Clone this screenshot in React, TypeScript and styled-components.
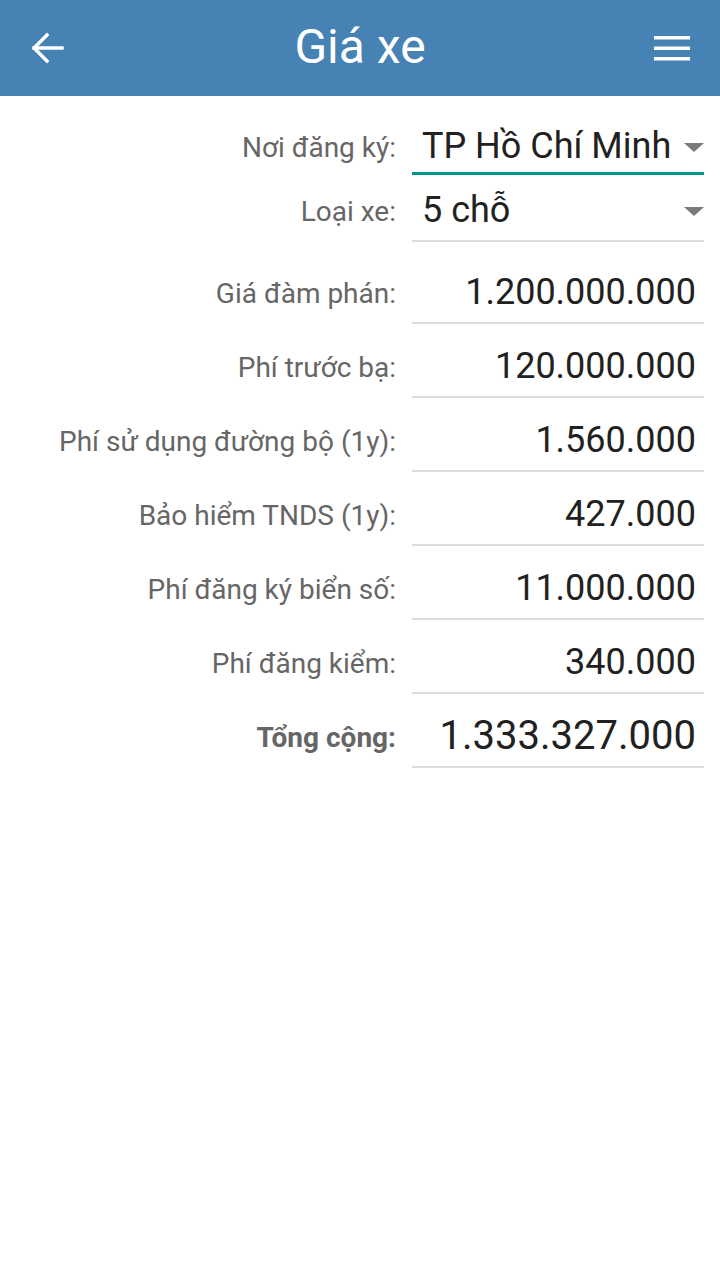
import styled, { createGlobalStyle } from "styled-components";

const GlobalStyle = createGlobalStyle`
  html, body {
    margin: 0;
    padding: 0;
    background: #ffffff;
    font-family: Roboto, "Noto Sans", "Liberation Sans", sans-serif;
  }
`;

const Page = styled.div`
  width: 720px;
  min-height: 1280px;
  background: #ffffff;
`;

const Toolbar = styled.header`
  height: 96px;
  background: #4682b4;
  display: grid;
  grid-template-columns: 1fr auto 1fr;
  align-items: center;
  padding: 0 30px;
  box-sizing: border-box;
  color: #ffffff;
`;

const Title = styled.h1`
  margin: 0;
  font-size: 48px;
  font-weight: 400;
  line-height: 1;
  padding-bottom: 2px;
`;

const IconButton = styled.button<{ $end?: boolean }>`
  background: none;
  border: none;
  padding: 0;
  display: flex;
  justify-self: ${(p) => (p.$end ? "end" : "start")};
  color: #ffffff;
  cursor: pointer;
`;

const Form = styled.section`
  padding: 24px 16px 0 0;
  display: flex;
  flex-direction: column;
`;

const Row = styled.div<{ $top: number }>`
  display: grid;
  grid-template-columns: 1fr 292px;
  column-gap: 16px;
  align-items: center;
  margin-top: ${(p) => p.$top}px;
`;

const Label = styled.label<{ $strong?: boolean }>`
  text-align: right;
  font-size: 28px;
  color: #666666;
  font-weight: ${(p) => (p.$strong ? 700 : 400)};
  white-space: nowrap;
`;

const Field = styled.div<{ $active?: boolean; $h: number }>`
  box-sizing: border-box;
  height: ${(p) => p.$h}px;
  display: flex;
  align-items: center;
  border-bottom: ${(p) => (p.$active ? "3px solid #009688" : "2px solid #dcdcdc")};
`;

const SelectText = styled.span`
  flex: 1;
  padding-left: 10px;
  font-size: 36px;
  line-height: 1;
  color: #212121;
  white-space: nowrap;
`;

const Caret = styled.span`
  width: 0;
  height: 0;
  margin-top: 3px;
  border-left: 10px solid transparent;
  border-right: 10px solid transparent;
  border-top: 9px solid #7a7a7a;
`;

const Value = styled.span<{ $big?: boolean }>`
  flex: 1;
  text-align: right;
  padding-right: 8px;
  font-size: ${(p) => (p.$big ? 40 : 36)}px;
  line-height: 1;
  color: #212121;
  white-space: nowrap;
`;

const costs = [
  { label: "Giá đàm phán:", value: "1.200.000.000" },
  { label: "Phí trước bạ:", value: "120.000.000" },
  { label: "Phí sử dụng đường bộ (1y):", value: "1.560.000" },
  { label: "Bảo hiểm TNDS (1y):", value: "427.000" },
  { label: "Phí đăng ký biển số:", value: "11.000.000" },
  { label: "Phí đăng kiểm:", value: "340.000" },
];

const BackArrow = () => (
  <svg width="34" height="32" viewBox="0 0 34 32" fill="none">
    <path
      d="M32 16H4M17 3L4 16l13 13"
      stroke="currentColor"
      strokeWidth="3.4"
      strokeLinecap="square"
    />
  </svg>
);

const MenuIcon = () => (
  <svg width="36" height="26" viewBox="0 0 36 26">
    <rect x="0" y="1" width="36" height="3.5" fill="currentColor" />
    <rect x="0" y="11.5" width="36" height="3.5" fill="currentColor" />
    <rect x="0" y="22" width="36" height="3.5" fill="currentColor" />
  </svg>
);

export default function App() {
  return (
    <Page>
      <GlobalStyle />
      <Toolbar>
        <IconButton aria-label="Back">
          <BackArrow />
        </IconButton>
        <Title>Giá xe</Title>
        <IconButton $end aria-label="Menu">
          <MenuIcon />
        </IconButton>
      </Toolbar>

      <Form>
        <Row $top={0}>
          <Label>Nơi đăng ký:</Label>
          <Field $active $h={55}>
            <SelectText>TP Hồ Chí Minh</SelectText>
            <Caret />
          </Field>
        </Row>
        <Row $top={5}>
          <Label>Loại xe:</Label>
          <Field $h={62}>
            <SelectText>5 chỗ</SelectText>
            <Caret />
          </Field>
        </Row>
        {costs.map((c, i) => (
          <Row key={c.label} $top={i === 0 ? 20 : 12}>
            <Label>{c.label}</Label>
            <Field $h={62}>
              <Value>{c.value}</Value>
            </Field>
          </Row>
        ))}
        <Row $top={12}>
          <Label $strong>Tổng cộng:</Label>
          <Field $h={62}>
            <Value $big>1.333.327.000</Value>
          </Field>
        </Row>
      </Form>
    </Page>
  );
}
